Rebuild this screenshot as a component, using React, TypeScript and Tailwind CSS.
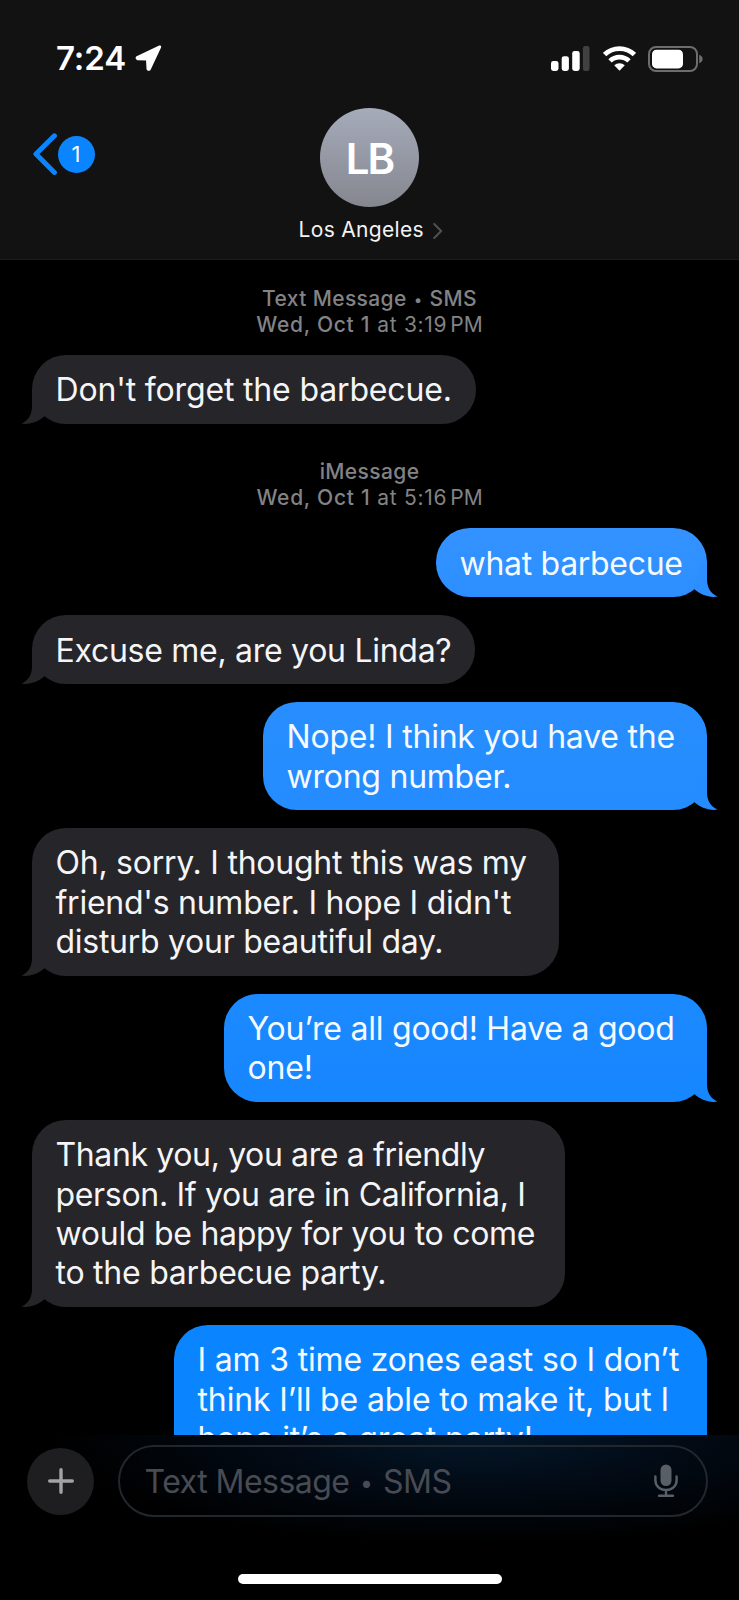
import clsx from 'clsx';

interface Line {
  text: string;
  tracking: string;
}

interface Message {
  id: number;
  mine?: boolean;
  style: string;
  tail: string;
  lines: Line[];
}

const firstMessages: Message[] = [
  {
    id: 1,
    style: 'w-[444px] bg-[#26252a]',
    tail: 'text-[#26252a]',
    lines: [{ text: "Don't forget the barbecue.", tracking: 'tracking-[-0.16px]' }],
  },
];

const messages: Message[] = [
  {
    id: 2,
    mine: true,
    style: 'w-[271px] bg-linear-to-b from-[#3392ff] to-[#2d8fff]',
    tail: 'text-[#2d8fff]',
    lines: [{ text: 'what barbecue', tracking: 'tracking-[-0.3px]' }],
  },
  {
    id: 3,
    style: 'w-[443px] bg-[#26252a]',
    tail: 'text-[#26252a]',
    lines: [{ text: 'Excuse me, are you Linda?', tracking: 'tracking-[-0.28px]' }],
  },
  {
    id: 4,
    mine: true,
    style: 'w-[444px] bg-linear-to-b from-[#288eff] to-[#248cff]',
    tail: 'text-[#248cff]',
    lines: [
      { text: 'Nope! I think you have the', tracking: 'tracking-[-0.21px]' },
      { text: 'wrong number.', tracking: 'tracking-[-0.24px]' },
    ],
  },
  {
    id: 5,
    style: 'w-[527px] bg-[#26252a]',
    tail: 'text-[#26252a]',
    lines: [
      { text: 'Oh, sorry. I thought this was my', tracking: 'tracking-[-0.25px]' },
      { text: "friend's number. I hope I didn't", tracking: 'tracking-[-0.25px]' },
      { text: 'disturb your beautiful day.', tracking: 'tracking-[-0.28px]' },
    ],
  },
  {
    id: 6,
    mine: true,
    style: 'w-[483px] bg-linear-to-b from-[#1b89ff] to-[#1787ff]',
    tail: 'text-[#1787ff]',
    lines: [
      { text: 'You’re all good! Have a good', tracking: 'tracking-[-0.24px]' },
      { text: 'one!', tracking: 'tracking-[-0.2px]' },
    ],
  },
  {
    id: 7,
    style: 'w-[533px] bg-[#26252a]',
    tail: 'text-[#26252a]',
    lines: [
      { text: 'Thank you, you are a friendly', tracking: 'tracking-[-0.37px]' },
      { text: 'person. If you are in California, I', tracking: 'tracking-[-0.316px]' },
      { text: 'would be happy for you to come', tracking: 'tracking-[-0.27px]' },
      { text: 'to the barbecue party.', tracking: 'tracking-[-0.25px]' },
    ],
  },
  {
    id: 8,
    mine: true,
    style: 'w-[533px] bg-[#0b84ff]',
    tail: 'text-[#0b84ff]',
    lines: [
      { text: 'I am 3 time zones east so I don’t', tracking: 'tracking-[-0.17px]' },
      { text: 'think I’ll be able to make it, but I', tracking: 'tracking-[-0.13px]' },
      { text: 'hope it’s a great party!', tracking: 'tracking-[-0.138px]' },
    ],
  },
];

function Bubble({ message }: { message: Message }) {
  const { mine, style, tail, lines } = message;
  return (
    <div
      className={clsx(
        'relative shrink-0 rounded-[34px] pt-[15.4px] pb-[14.2px] pl-[23.5px] text-[32px] leading-[39.4px] whitespace-nowrap',
        mine ? 'self-end text-[#f4faff]' : 'self-start text-[#f5f5f7]',
        style
      )}
    >
      {lines.map((line) => (
        <p key={line.text} className={line.tracking}>{line.text}</p>
      ))}
      <svg
        viewBox="0 0 28 34"
        className={clsx('absolute bottom-0 h-[34px] w-7', mine ? '-right-[11px]' : '-left-[11px] -scale-x-100', tail)}
        fill="currentColor"
      >
        <path d="M10 0H17V17C17.2 24.5 20.5 30.5 27.6 33.6C19 35 10 31.5 4.5 26.3Z" />
      </svg>
    </div>
  );
}

function Dot() {
  return <span className="inline-block w-[0.72em] text-center align-[0.08em] text-[0.72em] leading-none">•</span>;
}

function Timestamp({ service, carrier, time }: { service: string; carrier?: string; time: string }) {
  return (
    <div className="text-center text-[21px] leading-[26px] text-[#838386]">
      <p className="font-medium tracking-[0.38px]">
        {service}
        {carrier && <> <Dot /> {carrier}</>}
      </p>
      <p className="flex justify-center whitespace-nowrap">
        <span className="font-medium tracking-[0.72px]">Wed, Oct 1</span>
        <span className="ml-[7px] tracking-[0.7px]">at {time}</span>
        <span className="ml-[3px]">PM</span>
      </p>
    </div>
  );
}

function StatusBar() {
  return (
    <div className="flex h-[108px] items-center justify-between pt-[9px] pr-[36px] pl-[56px] text-white">
      <div className="flex items-center">
        <span className="w-[79px] pb-[2px] text-[33px] leading-[40px] font-semibold tracking-[-0.1px]">7:24</span>
        <svg viewBox="0 0 27 27" className="h-[27px] w-[27px]" fill="currentColor" stroke="currentColor" strokeWidth="2.8" strokeLinejoin="round">
          <path d="M24.8 1.8L2.2 12.4Q1.6 13.4 2.8 13.8L12.4 14.2L12.9 23.8Q13.4 24.8 14.5 24Z" />
        </svg>
      </div>
      <div className="flex items-center">
        <svg viewBox="0 0 39 25" className="h-[25px] w-[39px]" fill="currentColor">
          <rect x="0" y="15" width="7.5" height="10" rx="2.4" />
          <rect x="10.7" y="10.2" width="7.2" height="14.8" rx="2.4" />
          <rect x="21.2" y="5" width="7.5" height="20" rx="2.4" />
          <rect x="31.9" y="0" width="6.6" height="25" rx="2.2" fill="#414141" />
        </svg>
        <svg viewBox="0 0 33 25" className="ml-[12.5px] h-[25px] w-[33px]" fill="none" stroke="currentColor" strokeWidth="4.8">
          <path d="M1.6 8.6a21.4 21.4 0 0 1 29.8 0" />
          <path d="M7 14.9a13.6 13.6 0 0 1 19 0" />
          <path d="M11.2 19.3a7.6 7.6 0 0 1 10.6 0L16.5 24.8Z" fill="currentColor" stroke="none" />
        </svg>
        <svg viewBox="0 0 55 26" className="ml-[12.5px] h-[26px] w-[55px]">
          <rect x="1" y="1" width="48" height="24" rx="7" fill="none" stroke="#6d6d6d" strokeWidth="2" />
          <rect x="4" y="3.8" width="31" height="18.6" rx="4.5" fill="currentColor" />
          <path d="M51.2 8.8Q54.6 10 54.6 13T51.2 17.2Z" fill="#6d6d6d" />
        </svg>
      </div>
    </div>
  );
}

function Header() {
  return (
    <header className="h-[260px] shrink-0 border-b border-[#1d1d1d] bg-[#121212]">
      <StatusBar />
      <div className="grid grid-cols-3">
        <button className="flex h-[92px] items-center pl-[32px]">
          <svg viewBox="0 0 26 42" className="h-[42px] w-[26px]" fill="none" stroke="#0a84ff" strokeWidth="5" strokeLinecap="round" strokeLinejoin="round">
            <path d="M22.4 2.8L4 21L22.4 39.4" />
          </svg>
          <span className="flex h-[37px] w-[37px] items-center justify-center rounded-full bg-[#0a84ff] pr-px text-[22px] leading-none text-white">1</span>
        </button>
        <div className="flex flex-col items-center">
          <div className="flex h-[99px] w-[99px] items-center justify-center rounded-full bg-linear-to-b from-[#a6abba] to-[#85878f] text-[42px] leading-none font-semibold tracking-[-2px] text-white">
            <span className="pt-[3px]">LB</span>
          </div>
          <div className="flex items-center pt-[10px] pl-[3px]">
            <span className="text-[21px] leading-[26px] tracking-[0.32px] whitespace-nowrap text-[#f2f2f2]">Los Angeles</span>
            <svg viewBox="0 0 10 16" className="mt-[2px] ml-[9.5px] h-4 w-[10px]" fill="none" stroke="#515153" strokeWidth="2" strokeLinecap="round" strokeLinejoin="round">
              <path d="M1.2 1L8.2 8L1.2 15" />
            </svg>
          </div>
        </div>
      </div>
    </header>
  );
}

function Composer() {
  return (
    <footer className="flex flex-1 flex-col items-center bg-[radial-gradient(ellipse_430px_110px_at_480px_0px,#04172a_0%,#020a14_50%,#000_100%)] pt-[10.5px]">
      <div className="flex w-full items-center pr-[31.5px] pl-[27px]">
        <button className="flex h-[67px] w-[67px] items-center justify-center rounded-full bg-[#1e1e20]">
          <svg viewBox="0 0 26 26" className="h-[26px] w-[26px]" fill="none" stroke="#a3a3a5" strokeWidth="3.4" strokeLinecap="round">
            <path d="M13 1.7V24.3M1.7 13H24.3" />
          </svg>
        </button>
        <div className="ml-[24px] flex h-[72px] flex-1 items-center justify-between rounded-full border-2 border-[#22272d] pr-[28px] pl-[24.5px]">
          <span className="pt-[2px] text-[32px] leading-[38px] tracking-[-0.52px] whitespace-nowrap text-[#484b53]">Text Message <Dot /> SMS</span>
          <svg viewBox="0 0 24 34" className="h-[34px] w-6" fill="none" stroke="#5a5e66" strokeWidth="2.4" strokeLinecap="round">
            <rect x="6.5" y="0.5" width="11" height="21.5" rx="5.5" fill="#5a5e66" stroke="none" />
            <path d="M1.4 12.5V16.2C1.4 22 6 26 12 26S22.6 22 22.6 16.2V12.5M12 26V31.6M5 31.8H19" />
          </svg>
        </div>
      </div>
      <div className="mt-[57px] h-[10px] w-[264px] rounded-full bg-white" />
    </footer>
  );
}

export default function App() {
  return (
    <div className="flex h-[1600px] w-[739px] flex-col overflow-hidden bg-black font-['Inter','Liberation_Sans',sans-serif]">
      <Header />
      <main className="flex h-[1174.5px] shrink-0 flex-col overflow-hidden px-8 pt-[26px]">
        <Timestamp service="Text Message" carrier="SMS" time="3:19" />
        <div className="mt-[17px] mb-[35px] flex flex-col">
          {firstMessages.map((message) => (
            <Bubble key={message.id} message={message} />
          ))}
        </div>
        <Timestamp service="iMessage" time="5:16" />
        <div className="mt-[17.5px] flex flex-col gap-[17.75px]">
          {messages.map((message) => (
            <Bubble key={message.id} message={message} />
          ))}
        </div>
      </main>
      <Composer />
    </div>
  );
}
